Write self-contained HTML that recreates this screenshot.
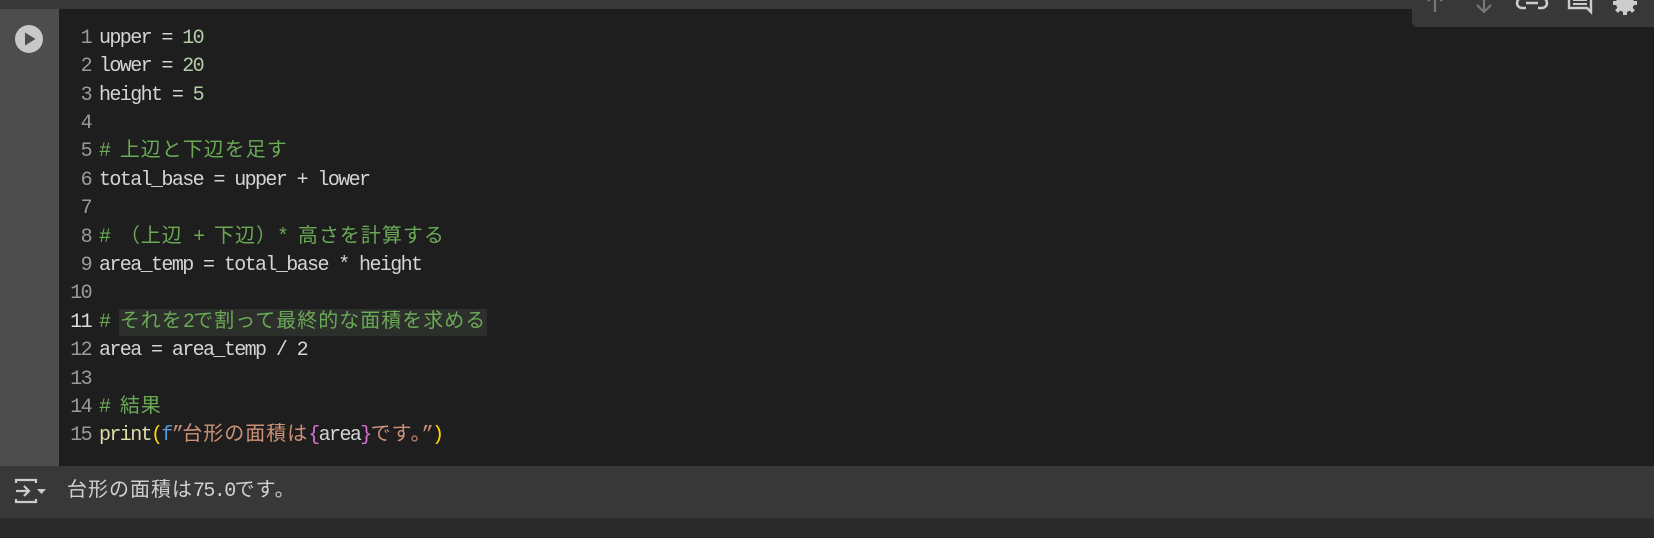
<!DOCTYPE html>
<html><head><meta charset="utf-8"><style>
body{margin:0;width:1654px;height:538px;background:#2a2a2a;position:relative;overflow:hidden;font-family:"Liberation Mono","Noto Sans CJK JP",monospace;}
#top{position:absolute;left:0;top:0;width:1654px;height:9px;background:#383838;}
#gut{position:absolute;left:0;top:9px;width:59px;height:457px;background:#4d4d4d;}
#code{position:absolute;left:59px;top:9px;width:1595px;height:457px;background:#1e1e1e;}
#out{position:absolute;left:0;top:466px;width:1654px;height:52px;background:#383838;}
.ln{position:absolute;left:59px;width:32px;text-align:right;font-size:20px;letter-spacing:-1.6px;color:#9a9a9a;line-height:28.4px;height:28.4px;}
.cd{position:absolute;left:99px;font-size:20px;letter-spacing:-1.6px;color:#d4d4d4;line-height:28.4px;height:28.4px;white-space:pre;}
.j{font-size:20px;letter-spacing:1px;font-family:"Noto Sans CJK JP",sans-serif;line-height:0;}
.c{color:#6aa955}.n{color:#b5cea8}.p{color:#dcdcaa}.y{color:#ffd700}.b{color:#569cd6}.s{color:#ce9178}.m{color:#da70d6}
#hl{position:absolute;left:119px;top:309px;width:368px;height:27px;background:#2c2f2c;}
#tb{position:absolute;left:1412px;top:0;width:242px;height:27px;background:#383838;border-bottom-left-radius:5px;}
</style></head><body>
<div id="top"></div><div id="gut"></div><div id="code"></div><div id="out"></div>
<div id="tb"><svg width="242" height="27" style="position:absolute;left:0;top:0">
<g stroke="#777" stroke-width="2.2" fill="none"><path d="M23 12V-6M16 1l7-7 7 7"/><path d="M72 -6V12M65 5l7 7 7-7"/></g>
<g stroke="#ccc" stroke-width="2.5" fill="none"><path d="M114 -2h-4a5 5 0 0 0 0 10h4M126 -2h4a5 5 0 0 1 0 10h-4M114 3h12"/></g>
<path d="M157 -6h22v18l-4-4h-18z" fill="none" stroke="#ccc" stroke-width="2.4"/><path d="M161 0h14M161 4h14" stroke="#ccc" stroke-width="2"/>
<circle cx="213" cy="3" r="9" fill="#ccc"/><circle cx="213" cy="3" r="3.5" fill="#383838"/>
<g fill="#ccc"><rect x="211" y="-9" width="4" height="24"/><rect x="201" y="1" width="24" height="4"/><rect x="211" y="-9" width="4" height="24" transform="rotate(45 213 3)"/><rect x="211" y="-9" width="4" height="24" transform="rotate(-45 213 3)"/></g>
</svg></div>
<svg style="position:absolute;left:15px;top:25px" width="28" height="28"><circle cx="14" cy="14" r="14" fill="#c8c8c8"/><path d="M10 7.5v13l10.5-6.5z" fill="#4d4d4d"/></svg>
<div id="hl"></div>
<div class="ln" style="top:24.8px">1</div><div class="cd" style="top:24.8px">upper = <span class="n">10</span></div>
<div class="ln" style="top:53.2px">2</div><div class="cd" style="top:53.2px">lower = <span class="n">20</span></div>
<div class="ln" style="top:81.6px">3</div><div class="cd" style="top:81.6px">height = <span class="n">5</span></div>
<div class="ln" style="top:110px">4</div>
<div class="ln" style="top:138.4px">5</div><div class="cd c" style="top:138.4px"># <span class="j">上辺と下辺を足す</span></div>
<div class="ln" style="top:166.8px">6</div><div class="cd" style="top:166.8px">total_base = upper + lower</div>
<div class="ln" style="top:195.2px">7</div>
<div class="ln" style="top:223.6px">8</div><div class="cd c" style="top:223.6px"># <span class="j">（上辺</span> + <span class="j">下辺）</span>* <span class="j">高さを計算する</span></div>
<div class="ln" style="top:252px">9</div><div class="cd" style="top:252px">area_temp = total_base * height</div>
<div class="ln" style="top:280.4px">10</div>
<div class="ln" style="top:308.8px;color:#ddd">11</div><div class="cd c" style="top:308.8px"># <span class="j">それを</span>2<span class="j">で割って最終的な面積を求める</span></div>
<div class="ln" style="top:337.2px">12</div><div class="cd" style="top:337.2px">area = area_temp / 2</div>
<div class="ln" style="top:365.6px">13</div>
<div class="ln" style="top:394px">14</div><div class="cd c" style="top:394px"># <span class="j">結果</span></div>
<div class="ln" style="top:422.4px">15</div><div class="cd" style="top:422.4px"><span class="p">print</span><span class="y">(</span><span class="b">f</span><span class="s">”<span class="j">台形の面積は</span></span><span class="m">{</span>area<span class="m">}</span><span class="s"><span class="j">です。</span>”</span><span class="y">)</span></div>
<svg style="position:absolute;left:14px;top:478px" width="34" height="26"><g stroke="#ccc" stroke-width="2.2" fill="none"><path d="M2 5V2h20v3M2 21v3h20v-3M2 13h13M10 8l5 5-5 5"/></g><path d="M23 11h9l-4.5 5z" fill="#ccc"/></svg>
<div style="position:absolute;left:67px;top:477px;font-size:20px;letter-spacing:-1.6px;color:#d0d0d0;line-height:30px;white-space:pre"><span class="j" style="letter-spacing:1px">台形の面積は</span>75.0<span class="j" style="letter-spacing:1px">です。</span></div>
</body></html>
